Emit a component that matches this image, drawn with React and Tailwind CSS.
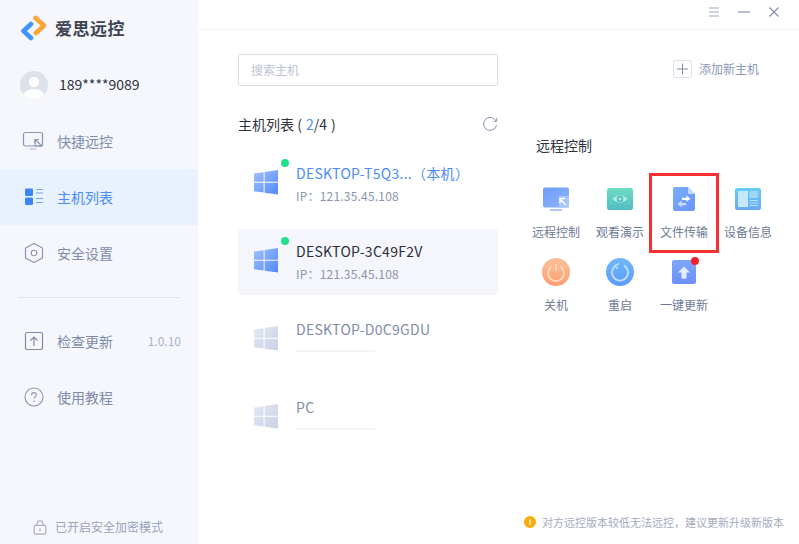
import React from "react";

const FONT = '"Noto Sans CJK SC", sans-serif';

function Logo() {
  return (
    <svg width="28" height="26" viewBox="0 0 28 26" fill="none" className="shrink-0">
      <path d="M11 10 L3.5 17 L11 24" transform="translate(0,-1)" stroke="#3f95fb" strokeWidth="4.6" strokeLinecap="round" strokeLinejoin="round" />
      <path d="M15.5 3 L24 10.5 L16 18" stroke="#fda435" strokeWidth="4.6" strokeLinecap="round" strokeLinejoin="round" />
    </svg>
  );
}

function Avatar() {
  return (
    <svg width="28" height="28" viewBox="0 0 28 28" className="shrink-0">
      <defs><clipPath id="av"><circle cx="14" cy="14" r="14" /></clipPath></defs>
      <circle cx="14" cy="14" r="14" fill="#dde1ea" />
      <g clipPath="url(#av)">
        <circle cx="14" cy="11" r="5.2" fill="#fff" />
        <ellipse cx="14" cy="25" rx="10.5" ry="7" fill="#fff" />
      </g>
    </svg>
  );
}

const S = "#8b96b4";

function IconRemote() {
  return (
    <svg width="24" height="20" viewBox="0 0 24 20" fill="none">
      <rect x="1.5" y="1.5" width="19" height="13.5" rx="2" stroke={S} strokeWidth="1.2" />
      <path d="M7.5 18h7" stroke="#c4cadb" strokeWidth="1.4" />
      <path d="M13 8.5 v6.5 h7.5" stroke={S} strokeWidth="1" />
      <path d="M13.5 9 l6.5 6M13 8.5h4M13 8.5v4" stroke={S} strokeWidth="1.2" />
    </svg>
  );
}

function IconList() {
  return (
    <svg width="20" height="18" viewBox="0 0 20 18" fill="none">
      <rect x="1" y="0.5" width="8" height="7.5" rx="1.2" fill="#3c86f8" />
      <rect x="1" y="9.5" width="8" height="7.5" rx="1.2" fill="#3c86f8" />
      <path d="M12 1.5h7M12 5h7M12 10.5h7M12 14.5h7" stroke="#6ca5fa" strokeWidth="1.2" />
    </svg>
  );
}

function IconHex() {
  return (
    <svg width="20" height="22" viewBox="0 0 20 22" fill="none">
      <path d="M10 1.5 L18.5 6 V16 L10 20.5 L1.5 16 V6 Z" stroke={S} strokeWidth="1.2" strokeLinejoin="round" />
      <circle cx="10" cy="11" r="2.8" stroke={S} strokeWidth="1.1" />
    </svg>
  );
}

function IconUpdate() {
  return (
    <svg width="20" height="20" viewBox="0 0 20 20" fill="none">
      <rect x="1.5" y="1.5" width="17" height="17" rx="1.5" stroke="#7f8bab" strokeWidth="1.2" />
      <path d="M10 15V6M6.5 9.5 10 6l3.5 3.5" stroke="#7f8bab" strokeWidth="1.2" />
    </svg>
  );
}

function IconHelp() {
  return (
    <svg width="20" height="20" viewBox="0 0 20 20" fill="none">
      <circle cx="10" cy="10" r="9" stroke={S} strokeWidth="1.1" />
      <path d="M7.6 8c0-1.5 1-2.4 2.4-2.4s2.4.9 2.4 2.2c0 1.9-2.4 1.9-2.4 3.8" stroke={S} strokeWidth="1.1" />
      <circle cx="10" cy="14.3" r=".8" fill={S} />
    </svg>
  );
}

function IconLock() {
  return (
    <svg width="14" height="15" viewBox="0 0 14 15" fill="none">
      <rect x="1.2" y="5.5" width="11.6" height="8.6" rx="1.2" stroke="#a2abc3" strokeWidth="1.1" />
      <path d="M4 5.5V3.8a3 3 0 0 1 6 0v1.7" stroke="#a2abc3" strokeWidth="1.1" />
      <path d="M7 8.5v2.5" stroke="#a2abc3" strokeWidth="1.3" />
    </svg>
  );
}

function NavItem({ icon, label, active, right }) {
  return (
    <div className={`h-[56px] flex items-center ${active ? "bg-[#e8f1fe]" : ""}`}>
      <div className="w-[24px] ml-[22px] flex justify-center">{icon}</div>
      <span className={`ml-[11px] text-[14px] ${active ? "text-[#4b8cf7]" : "text-[#7f8bab]"}`}>{label}</span>
      {right && <span className="ml-auto mr-[17px] text-[12px] text-[#a9b2c9]">{right}</span>}
    </div>
  );
}

function WinIcon({ id, from, to }) {
  return (
    <svg width="24" height="25" viewBox="0 0 24 25" className="shrink-0">
      <defs>
        <linearGradient id={id} x1="0" y1="0" x2="1" y2="1">
          <stop offset="0" stopColor={from} />
          <stop offset="1" stopColor={to} />
        </linearGradient>
      </defs>
      <path d="M0 3.6 L9.6 2.2 V11.7 H0 Z M10.6 2 L24 0 V11.7 H10.6 Z M0 12.8 H9.6 V22.5 L0 21.2 Z M10.6 12.8 H24 V24.6 L10.6 22.7 Z" fill={`url(#${id})`} />
    </svg>
  );
}

function Host({ id, name, online, active, selected, suffix }) {
  return (
    <div className={`relative h-[66px] rounded-[4px] flex items-start pl-[16px] ${selected ? "bg-[#f5f6fb]" : ""}`}>
      {online && <div className="absolute left-[43px] top-[8px] w-[8px] h-[8px] rounded-full bg-[#22e08a]" />}
      <div className="mt-[19px]">
        {online ? <WinIcon id={id} from="#a3c1fd" to="#528afa" /> : <WinIcon id={id} from="#e6e9f2" to="#c9d1e4" />}
      </div>
      <div className="ml-[18px] flex flex-col">
        <div className={`mt-[11px] h-[22px] leading-[22px] text-[14px] tracking-[0.28px] whitespace-nowrap ${active ? "text-[#4b8cf7]" : online ? "text-[#2b2f3b]" : "text-[#7f8bab]"}`}>
          {name}{suffix}
        </div>
        {online ? (
          <div className="mt-[2px] h-[20px] leading-[20px] text-[12px] tracking-[0.2px] text-[#8b94ac]">IP：121.35.45.108</div>
        ) : (
          <div className="mt-[10px] w-[79px] h-[2px] bg-[#f4f5f8]" />
        )}
      </div>
    </div>
  );
}

function Tile({ icon, label, badge, boxed }) {
  return (
    <div className="relative h-[73px] flex flex-col items-center">
      <div className="relative h-[36px] w-[36px] flex items-center justify-center">
        {icon}
        {badge && <div className="absolute right-[3px] top-[3px] w-[8px] h-[8px] rounded-full bg-[#f5222d]" />}
      </div>
      <div className="mt-[6px] h-[18px] leading-[18px] text-[12px] text-[#6d7996] whitespace-nowrap">{label}</div>
      {boxed && <div className="absolute -left-[3px] -right-[3px] -top-[8px] h-[80px] border-[3px] border-[#f73131]" />}
    </div>
  );
}

function GRemote() {
  return (
    <svg width="26" height="24" viewBox="0 0 26 24">
      <defs><linearGradient id="g1" x1="0" y1="0" x2="1" y2="1"><stop offset="0" stopColor="#6e9cf8" /><stop offset="1" stopColor="#8fb4fb" /></linearGradient></defs>
      <rect x="0" y="0.5" width="26" height="20" rx="2" fill="url(#g1)" />
      <path d="M7 23h12" stroke="#8fb4fb" strokeWidth="1.5" />
      <rect x="16" y="9" width="10" height="11.5" fill="#a9c6fc" />
      <path d="M23 18 L17 12 M17 16.5V11.5H22" stroke="#fff" strokeWidth="1.5" fill="none" />
    </svg>
  );
}
function GEye() {
  return (
    <svg width="26" height="22" viewBox="0 0 26 22">
      <defs><linearGradient id="g2" x1="0" y1="0" x2="0" y2="1"><stop offset="0" stopColor="#6fdcc3" /><stop offset="1" stopColor="#50bcc4" /></linearGradient></defs>
      <rect width="26" height="22" rx="2" fill="url(#g2)" />
      <path d="M5.5 11 Q13 3.5 20.5 11 Q13 18.5 5.5 11 Z" fill="#a8ebe0" />
      <circle cx="13" cy="11" r="3.2" fill="#4fbdb9" />
      <circle cx="13" cy="11" r="1.6" fill="#a8ebe0" />
    </svg>
  );
}
function GFile() {
  return (
    <svg width="22" height="24" viewBox="0 0 22 24">
      <defs><linearGradient id="g3" x1="0" y1="0" x2="1" y2="1"><stop offset="0" stopColor="#79aefc" /><stop offset="1" stopColor="#6b95fa" /></linearGradient></defs>
      <path d="M2 0 H15 L22 7 V22 a2 2 0 0 1 -2 2 H2 a2 2 0 0 1 -2 -2 V2 a2 2 0 0 1 2 -2 Z" fill="url(#g3)" />
      <path d="M15 0 L22 7 H16 a1 1 0 0 1 -1 -1 Z" fill="#c4dafe" />
      <path d="M9 10.8 H13.5 V8.5 L17.5 11.8 L13.5 14.8 V13 H9 Z" fill="#fff" />
      <path d="M13 16 H8.5 V13.8 L4.5 16.8 L8.5 20.5 V18.2 H13 Z" fill="#fff" fillOpacity=".65" />
    </svg>
  );
}
function GInfo() {
  return (
    <svg width="26" height="22" viewBox="0 0 26 22">
      <defs><linearGradient id="g4" x1="0" y1="0" x2="0" y2="1"><stop offset="0" stopColor="#66cdf6" /><stop offset="1" stopColor="#6aa8f8" /></linearGradient></defs>
      <rect width="26" height="22" rx="2" fill="url(#g4)" />
      <rect x="3" y="3" width="10" height="16" fill="#c5e9fb" />
      <rect x="14.5" y="3" width="8.5" height="7" fill="#9fd6f8" />
      <path d="M14.5 12.5H23M14.5 15H23M14.5 17.5H23" stroke="#b5dffa" strokeWidth="1.1" />
    </svg>
  );
}
function GPower() {
  return (
    <svg width="28" height="28" viewBox="0 0 28 28" fill="none">
      <defs><linearGradient id="g5" x1="0" y1="0" x2="0" y2="1"><stop offset="0" stopColor="#fdc09a" /><stop offset="1" stopColor="#fb9f6f" /></linearGradient></defs>
      <circle cx="14" cy="14" r="14" fill="url(#g5)" />
      <path d="M9.5 8.5a8 8 0 1 0 9 0" stroke="#fddcc6" strokeWidth="1.7" />
      <path d="M14 6v7" stroke="#fddcc6" strokeWidth="1.7" />
    </svg>
  );
}
function GRestart() {
  return (
    <svg width="28" height="28" viewBox="0 0 28 28" fill="none">
      <defs><linearGradient id="g6" x1="0" y1="0" x2="0" y2="1"><stop offset="0" stopColor="#6fb9fb" /><stop offset="1" stopColor="#5c9bfa" /></linearGradient></defs>
      <circle cx="14" cy="14" r="14" fill="url(#g6)" />
      <path d="M10 7.6a8 8 0 1 0 8 0" stroke="#c3defd" strokeWidth="1.7" />
      <path d="M13 5.5 L9 7.5 L11.5 11" stroke="#c3defd" strokeWidth="1.4" />
    </svg>
  );
}
function GUp() {
  return (
    <svg width="24" height="24" viewBox="0 0 24 24">
      <defs><linearGradient id="g7" x1="0" y1="0" x2="0" y2="1"><stop offset="0" stopColor="#7ea6fb" /><stop offset="1" stopColor="#6b90f9" /></linearGradient></defs>
      <rect width="24" height="24" rx="2" fill="url(#g7)" />
      <path d="M12 6.5 L18 12.5 H14.5 V18.5 H9.5 V12.5 H6 Z" fill="#e2ecfe" />
    </svg>
  );
}

export default function App() {
  return (
    <div className="w-[799px] h-[544px] flex bg-white overflow-hidden" style={{ fontFamily: FONT }}>
      <aside className="w-[198px] shrink-0 bg-[#f5f7fd] flex flex-col">
        <div className="h-[56px] flex items-center pl-[20px]">
          <Logo />
          <span className="ml-[7px] text-[17px] font-bold text-[#3f4350] tracking-[0.5px]">爱思远控</span>
        </div>
        <div className="h-[57px] flex items-center pl-[20px]">
          <Avatar />
          <span className="ml-[11px] text-[14px] text-[#2f3340]">189****9089</span>
        </div>
        <NavItem icon={<IconRemote />} label="快捷远控" />
        <NavItem icon={<IconList />} label="主机列表" active />
        <NavItem icon={<IconHex />} label="安全设置" />
        <div className="mx-[18px] mt-[16px] h-px bg-[#dfe2ea]" />
        <div className="mt-[15px]">
          <NavItem icon={<IconUpdate />} label="检查更新" right="1.0.10" />
          <NavItem icon={<IconHelp />} label="使用教程" />
        </div>
        <div className="mt-auto h-[34px] flex items-center pl-[33px]">
          <IconLock />
          <span className="ml-[8px] text-[12px] text-[#9aa3bb]">已开启安全加密模式</span>
        </div>
      </aside>

      <main className="flex-1 flex flex-col min-w-0">
        <header className="h-[30px] shrink-0 border-b border-[#f1f2f5] flex items-center justify-end pr-[20px] pb-[5px]">
          <svg width="10" height="10" viewBox="0 0 10 10" fill="none">
            <path d="M0 1h10M0 5h10M0 9h10" stroke="#9ea8c0" strokeWidth="1.2" />
          </svg>
          <svg width="12" height="12" viewBox="0 0 12 12" fill="none" className="ml-[19px]">
            <path d="M0 6h12" stroke="#aeb6ca" strokeWidth="1.8" />
          </svg>
          <svg width="10" height="10" viewBox="0 0 10 10" fill="none" className="ml-[19px]">
            <path d="M.5.5l9 9M9.5.5l-9 9" stroke="#7f8bab" strokeWidth="1.1" />
          </svg>
        </header>

        <div className="flex-1 flex min-h-0">
          <section className="ml-[40px] w-[260px] shrink-0 pt-[24px]">
            <div className="h-[32px] border border-[#d9dde6] rounded-[3px] flex items-center pl-[12px] text-[12px] text-[#bcc3d3]">搜索主机</div>
            <div className="mt-[25px] h-[26px] flex items-center justify-between">
              <span className="text-[14px] text-[#2f3340] whitespace-pre">主机列表 (<span className="ml-[4px] text-[#4b8cf7]">2</span>/4<span className="ml-[4px]">)</span></span>
              <svg width="16" height="15" viewBox="0 0 16 15" fill="none">
                <path d="M13.8 3.8A6.5 6.5 0 1 0 14.5 8" stroke="#8b96b4" strokeWidth="1" />
                <path d="M14.8 .8v3.5h-3.5" stroke="#8b96b4" strokeWidth="1" />
              </svg>
            </div>
            <div className="mt-[14px] flex flex-col gap-[12px]">
              <Host id="w1" name="DESKTOP-T5Q3..." suffix="（本机）" online active />
              <Host id="w2" name="DESKTOP-3C49F2V" online selected />
              <Host id="w3" name="DESKTOP-D0C9GDU" />
              <Host id="w4" name="PC" />
            </div>
          </section>

          <section className="flex-1 min-w-0 flex flex-col pl-[26px]">
            <div className="pt-[28px] h-[50px] flex items-center justify-end pr-[40px]">
              <svg width="19" height="18" viewBox="0 0 19 18" fill="none">
                <rect x=".5" y=".5" width="18" height="17" rx="1.5" stroke="#dfe2ea" />
                <path d="M9.5 3.5v11M4 9h11" stroke="#7f8bab" strokeWidth="1" />
              </svg>
              <span className="ml-[7px] text-[12px] text-[#8b96b4]">添加新主机</span>
            </div>
            <div className="mt-[55px] pl-[12px] h-[20px] leading-[20px] text-[14px] text-[#2f3340]">远程控制</div>
            <div className="mt-[26px] w-[256px] grid grid-cols-4">
              <Tile icon={<GRemote />} label="远程控制" />
              <Tile icon={<GEye />} label="观看演示" />
              <Tile icon={<GFile />} label="文件传输" boxed />
              <Tile icon={<GInfo />} label="设备信息" />
              <Tile icon={<GPower />} label="关机" />
              <Tile icon={<GRestart />} label="重启" />
              <Tile icon={<GUp />} label="一键更新" badge />
            </div>
            <div className="mt-auto mb-[14px] flex items-center">
              <svg width="12" height="12" viewBox="0 0 12 12" className="shrink-0">
                <circle cx="6" cy="6" r="6" fill="#fdab0a" />
                <path d="M6 3v6" stroke="#fff" strokeWidth="1.2" />
              </svg>
              <span className="ml-[6px] text-[11px] text-[#a4abbd] whitespace-nowrap">对方远控版本较低无法远控，建议更新升级新版本</span>
            </div>
          </section>
        </div>
      </main>
    </div>
  );
}
